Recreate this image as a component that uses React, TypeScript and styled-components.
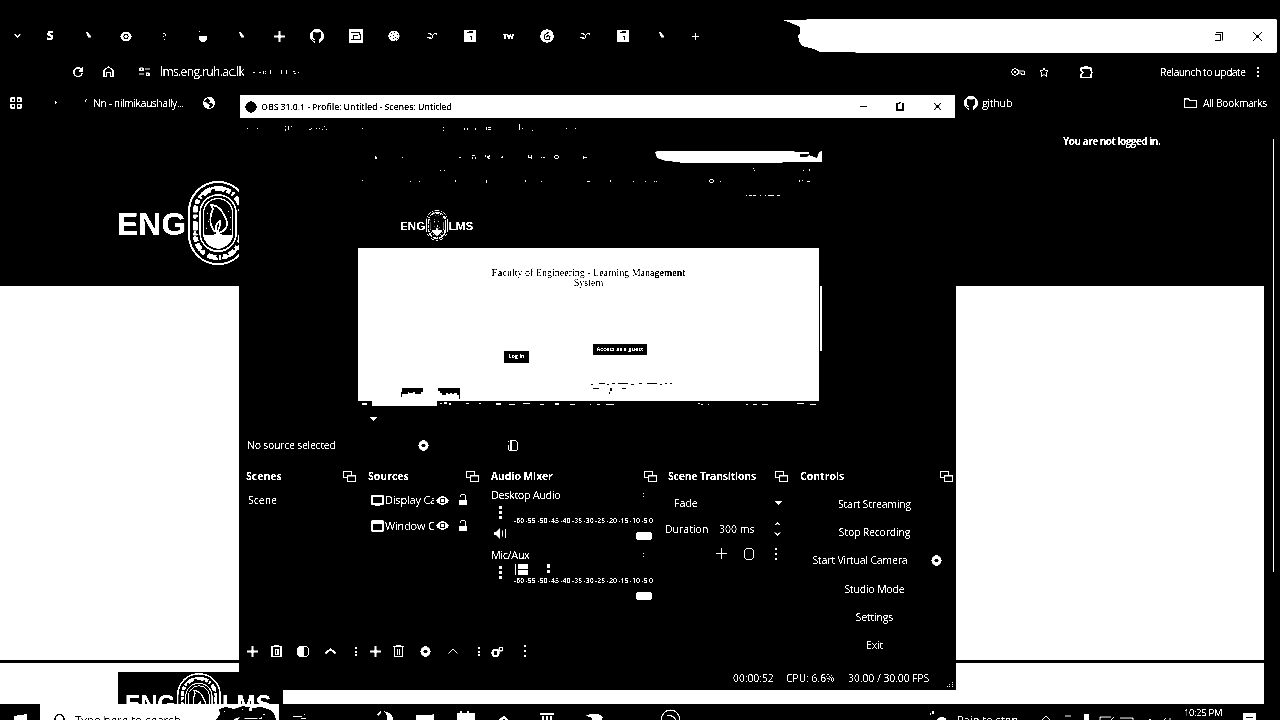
import React from 'react';
import styled, { createGlobalStyle } from 'styled-components';

const Global = createGlobalStyle`
  * { box-sizing: border-box; }
  body { margin: 0; background: #000; }
  svg { display: block; flex: none; overflow: visible; }
`;

const Desktop = styled.div`
  position: relative;
  width: 1280px;
  height: 720px;
  overflow: hidden;
  background: #000;
  color: #fff;
  font-family: 'Open Sans', 'Noto Sans', sans-serif;
  font-size: 11px;
  line-height: 1;
  filter: grayscale(1) contrast(12);
`;

/* ---------- shared parts ---------- */
const Row = styled.div<{ $h: number; $pl?: number; $pt?: number; $top?: boolean }>`
  display: flex;
  align-items: ${p => (p.$top ? 'flex-start' : 'center')};
  flex: none;
  height: ${p => p.$h}px;
  padding-top: ${p => p.$pt ?? 0}px;
  padding-left: ${p => p.$pl ?? 0}px;
`;
const Slot = styled.div<{ $w: number; $ml?: number; $pt?: number; $pb?: number; $start?: boolean }>`
  display: flex;
  flex: none;
  align-items: center;
  justify-content: ${p => (p.$start ? 'flex-start' : 'center')};
  width: ${p => p.$w}px;
  margin-left: ${p => p.$ml ?? 0}px;
  padding-top: ${p => p.$pt ?? 0}px;
  padding-bottom: ${p => p.$pb ?? 0}px;
`;
const Label = styled.span<{ $ml?: number; $mt?: number; $size?: number; $ls?: number; $weight?: number; $w?: number; $clip?: boolean }>`
  flex: none;
  white-space: nowrap;
  overflow: ${p => (p.$clip ? 'hidden' : 'visible')};
  width: ${p => (p.$w ? p.$w + 'px' : 'auto')};
  line-height: 16px;
  margin-left: ${p => p.$ml ?? 0}px;
  margin-top: ${p => p.$mt ?? 0}px;
  font-size: ${p => p.$size ?? 10.5}px;
  letter-spacing: ${p => p.$ls ?? 0}px;
  font-weight: ${p => p.$weight ?? 500};
`;

type Box = [number, number, number, number];
const Specks = ({ w, h, boxes, color = '#fff' }: { w: number; h: number; boxes: Box[]; color?: string }) => (
  <svg width={w} height={h} shapeRendering="crispEdges">
    {boxes.map((b, i) => <rect key={i} x={b[0]} y={b[1]} width={b[2]} height={b[3]} fill={color} />)}
  </svg>
);

/* ---------- icons ---------- */
const Line = ({ w, h, d, sw = 1, color = '#fff', fill = 'none' }: { w: number; h: number; d: string; sw?: number; color?: string; fill?: string }) => (
  <svg width={w} height={h} viewBox={`0 0 ${w} ${h}`} fill={fill} stroke={color} strokeWidth={sw}><path d={d} /></svg>
);
const Plus = ({ s = 11, sw = 1.5 }: { s?: number; sw?: number }) => <Line w={s} h={s} sw={sw} d={`M${s / 2} 0V${s}M0 ${s / 2}H${s}`} />;
const Dots = ({ s = 2, gap = 2.5 }: { s?: number; gap?: number }) => (
  <Specks w={s} h={s * 3 + gap * 2} boxes={[[0, 0, s, s], [0, s + gap, s, s], [0, 2 * (s + gap), s, s]]} />
);
const Gear = ({ s = 11 }: { s?: number }) => (
  <svg width={s} height={s} viewBox="0 0 11 11">
    <path fill="#fff" fillRule="evenodd" d="M4.500 0h2l.7 1.600h2L9.800 3.500 11 5.500 9.800 7.500 9.200 9.400h-2L6.500 11h-2L3.800 9.400h-2L1.200 7.500 0 5.500 1.200 3.500 1.800 1.600h2zM5.500 3.400a2.100 2.100 0 1 0 0 4.200 2.100 2.100 0 1 0 0-4.200z" />
  </svg>
);
const Popout = () => <Line w={13} h={11} d="M4.500 6.500H.5V.5H8.500V4M4.500 4.500H12.500V10.500H4.500zM4 5H13" />;
const Caret = () => <svg width={7} height={4}><path d="M0 0H7L3.500 4z" fill="#fff" /></svg>;
const Chevron = ({ down, w = 11, h = 6, sw = 1.7 }: { down?: boolean; w?: number; h?: number; sw?: number }) => (
  <Line w={w} h={h} sw={sw} d={down ? `M.5 .5L${w / 2} ${h - 1}L${w - 0.5} .5` : `M.5 ${h - 0.5}L${w / 2} 1L${w - 0.5} ${h - 0.5}`} />
);
const Trash = ({ bold }: { bold?: boolean }) => (
  <Specks w={11} h={12} boxes={[
    [0, 1, 11, 1], [3, 0, 5, 1], [1, 2, 1, 10], [9, 2, 1, 10], [1, 11, 9, 1], [4, 4, 1, 6], [6, 4, 1, 6],
    ...(bold ? ([[0, 2, 1, 10], [10, 2, 1, 10], [4, 4, 4, 1], [4, 9, 4, 1], [7, 4, 1, 6]] as Box[]) : []),
  ]} />
);
const Eye = () => (
  <svg width={13} height={9} viewBox="0 0 13 9">
    <path d="M0 4.500C3-1.300 10-1.300 13 4.500 10 10.300 3 10.300 0 4.500z" fill="#fff" />
    <circle cx="6.500" cy="4.500" r="2.300" fill="none" stroke="#000" strokeWidth="1.300" />
  </svg>
);
const Lock = () => (
  <Specks w={8} h={12} boxes={[[2, 0, 4, 1], [1, 1, 1, 2], [6, 1, 1, 5], [0, 6, 8, 5]]} />
);
const Github = ({ s = 14 }: { s?: number }) => (
  <svg width={s} height={s} viewBox="0 0 16 16"><path fill="#fff" d="M8 0C3.580 0 0 3.580 0 8c0 3.540 2.290 6.530 5.470 7.590.4.070.55-.17.55-.38 0-.19-.01-.82-.01-1.490-2.010.37-2.530-.49-2.690-.94-.09-.23-.48-.94-.82-1.130-.28-.15-.68-.52-.01-.53.63-.01 1.080.58 1.230.82.72 1.210 1.870.87 2.330.66.070-.52.28-.87.51-1.070-1.780-.2-3.640-.89-3.640-3.950 0-.87.31-1.590.82-2.150-.08-.2-.36-1.020.08-2.120 0 0 .67-.21 2.200.82.64-.18 1.320-.27 2-.27s1.360.09 2 .27c1.530-1.040 2.200-.82 2.200-.82.44 1.100.16 1.920.08 2.120.51.56.82 1.270.82 2.150 0 3.070-1.870 3.750-3.650 3.950.29.25.54.73.54 1.480 0 1.070-.01 1.930-.01 2.200 0 .21.15.46.55.38A8.010 8.010 0 0 0 16 8c0-4.420-3.580-8-8-8z" /></svg>
);
const Leaf = () => <svg width={5} height={9}><path d="M0 0H2L3 2 5 4V5.500H2L1 3z" fill="#fff" /></svg>;
const Squiggle = () => <Specks w={10} h={8} boxes={[[1, 1, 3, 1], [3, 2, 2, 1], [5, 3, 1, 1], [0, 5, 4, 1], [2, 6, 3, 1], [5, 4, 1, 2], [6, 2, 1, 1], [7, 1, 3, 1], [9, 2, 1, 1]]} />;
const SquareT = () => (
  <svg width={12} height={12} shapeRendering="crispEdges"><rect width="12" height="12" fill="#fff" /><path d="M3 2H9V3H3zM5 1H9V2H5zM7 6H8V10H7zM6 6H8V7H6z" fill="#000" /></svg>
);
const Swirl = () => (
  <svg width={14} height={14}><circle cx="7" cy="7" r="6.800" fill="#fff" /><path d="M9 3L5 5.500 4 9 6 11 9.500 10 10 7.500 7.500 6.500 6.500 8.500" stroke="#000" fill="none" strokeWidth="1.100" /></svg>
);
const Globe = () => (
  <svg width={12} height={12}><circle cx="6" cy="6" r="5.400" fill="#000" stroke="#fff" strokeWidth="1.100" /><path d="M0 5L3 5 5 7 7 8 5.500 11 3 11 1 9zM5 1L8 0 11 3 12 7 10 8 8.500 6 6 6 7 4z" fill="#fff" /></svg>
);
const Knot = () => (
  <svg width={12} height={12}><circle cx="6" cy="6" r="5.600" fill="#fff" /><path d="M3 2.500h1v1h-1zM6 2h1v1h-1zM8.500 4h1v1h-1zM5 4.500h1v1h-1zM2 6h1v1h-1zM7 6.500h1v1h-1zM4.500 8h1v1h-1zM9 8h1v1h-1zM6.500 10h1v1h-1z" fill="#000" shapeRendering="crispEdges" /></svg>
);

const Wordmark = styled.div<{ $size: number }>`
  display: flex;
  align-items: center;
  flex: none;
  font-family: 'Liberation Sans', Arial, sans-serif;
  font-weight: 700;
  font-size: ${p => p.$size}px;
  gap: 0.06em;
  span { padding-top: 0.05em; }
`;
const Logo = ({ size }: { size: number }) => (
  <Wordmark $size={size}>
    <span>ENG</span>
    <svg width={size * 1.88} height={size * 2.63} viewBox="0 0 60 84" fill="none" stroke="#fff">
      <rect x="1" y="1" width="58" height="82" rx="29" strokeWidth="2" />
      <rect x="7.500" y="7.500" width="45" height="69" rx="22.500" strokeWidth="5" strokeDasharray="7 2 4 2 2 3 9 4 3 2" />
      <rect x="6.500" y="6.500" width="47" height="71" rx="23.500" strokeWidth="2" strokeDasharray="3 4 6 2" />
      <rect x="11.500" y="13.500" width="37" height="57" rx="18.500" stroke="#000" strokeWidth="4" />
      <rect x="12" y="14" width="36" height="56" rx="18" strokeWidth="1.500" />
      <rect x="15.500" y="17.500" width="29" height="49" rx="14.500" strokeWidth="1.300" />
      <path d="M27 51C20 43 22 33 25 28L23 24C31 24 34 30 38 38C41 45 37 50 30 52C25 47 29 41 32 40C33 45 30 48 29 52" strokeWidth="1.700" />
      <path d="M17 54L25 55 29 52 36 55 43 54C43 62 36 67 30 67S18 63 17 54z" fill="#fff" />
      <path d="M19 32h1M20 40h1M40 30h1M42 36h1M18 47h1M42 48h1" strokeWidth="1.300" />
    </svg>
    <span>LMS</span>
  </Wordmark>
);

/* ---------- browser ---------- */
const Browser = styled.div`
  display: flex;
  flex-direction: column;
  width: 1280px;
  height: 704px;
  padding-top: 19px;
`;
const TabStrip = styled.div`
  display: flex;
  height: 34px;
  flex: none;
  align-items: center;
`;
const CaptionBar = styled.div`
  display: flex;
  align-items: center;
  width: 495px;
  height: 34px;
  margin-left: auto;
  margin-right: 3px;
  background: #fff;
  clip-path: polygon(0 1px, 24px 1px, 25px 0, 494px 0, 495px 1px, 495px 33px, 494px 34px, 74px 34px, 73px 33px, 38px 33px, 32px 30px, 20px 27px, 17px 22px, 16px 16px, 18px 15px, 18px 8px, 7px 3px);
`;
const SiteHeader = styled.div`
  display: flex;
  height: 171px;
  flex: none;
`;
const SiteBrand = styled.div`
  padding: 66px 0 0 117px;
  width: 1063px;
  flex: none;
  display: flex;
  align-items: flex-start;
`;
const PageBody = styled.div`
  display: flex;
  height: 418px;
  flex: none;
`;
const PageColumn = styled.div`
  width: 1264px;
  display: flex;
  flex-direction: column;
  gap: 3px;
`;
const WhiteArea = styled.div<{ $h: number }>`
  height: ${p => p.$h}px;
  flex: none;
  background: #fff;
`;
const FooterBrand = styled.div`
  width: 165px;
  height: 32px;
  margin: 9px 0 0 118px;
  padding: 1px 0 0 7px;
  background: #000;
  overflow: hidden;
`;
const ScrollThumb = styled.div`
  position: absolute;
  left: 1273px;
  top: 139px;
  width: 1px;
  height: 433px;
  background: #fff;
`;
const Badge = styled.span<{ $size: number }>`
  font-size: ${p => p.$size}px;
  font-weight: 800;
`;

/* ---------- recorder window ---------- */
const Recorder = styled.div`
  position: absolute;
  left: 239px;
  top: 94px;
  width: 717px;
  height: 596px;
  background: #000;
  padding: 1px 1px 0;
  display: flex;
  flex-direction: column;
`;
const TitleBar = styled.div`
  height: 23px;
  flex: none;
  display: flex;
  align-items: center;
  background: #fff;
  color: #000;
`;
const Capture = styled.div`
  width: 465px;
  height: 260px;
  margin-left: 118px;
  flex: none;
  display: flex;
  flex-direction: column;
`;
const CaptureCaption = styled.div`
  width: 167px;
  height: 12px;
  margin: 1px 0 0 297px;
  background: #fff;
  clip-path: polygon(0 1px, 3px 0, 139px 0, 140px 1px, 154px 1px, 154px 3px, 145px 3px, 145px 6px, 152px 6px, 154px 4px, 159px 6px, 162px 7px, 164px 1px, 167px 0, 167px 11px, 128px 11px, 127px 12px, 26px 12px, 24px 11px, 11px 10px, 2px 7px);
`;
const CapturePage = styled.div`
  width: 461px;
  height: 153px;
  background: #fff;
  color: #000;
  padding-top: 20px;
  display: flex;
  flex-direction: column;
`;
const Heading = styled.div`
  font: 400 10px/10px 'Liberation Serif', serif;
  text-align: center;
  b { font-weight: 700; }
`;
const Forms = styled.div`
  display: flex;
  align-items: flex-start;
  height: 78px;
  padding: 25px 0 0 145px;
`;
const SmallButton = styled.div<{ $w: number; $h: number; $mt: number; $ml: number }>`
  width: ${p => p.$w}px;
  height: ${p => p.$h}px;
  margin: ${p => p.$mt}px 0 0 ${p => p.$ml}px;
  background: #000;
  color: #fff;
  font-size: 5.5px;
  font-weight: 700;
  line-height: ${p => p.$h - 1}px;
  text-align: center;
  white-space: nowrap;
`;
const Docks = styled.div`
  display: flex;
  height: 198px;
  flex: none;
`;
const Dock = styled.div<{ $w: number; $pl: number }>`
  width: ${p => p.$w}px;
  padding-left: ${p => p.$pl}px;
  flex: none;
  display: flex;
  flex-direction: column;
`;
const DockTitle = styled.div<{ $end: number }>`
  display: flex;
  align-items: center;
  justify-content: space-between;
  height: 20px;
  flex: none;
  padding-right: ${p => p.$end}px;
`;
const DockTools = styled.div`
  display: flex;
  align-items: center;
  height: 28px;
  flex: none;
  margin-top: -27px;
`;
const MixerColumn = styled.div`
  width: 161px;
`;
const Scale = styled.div`
  display: flex;
  justify-content: space-between;
  width: 139px;
  margin: 2px 0 0 23px;
  font-size: 7px;
  font-weight: 600;
  line-height: 8px;
`;
const Knob = styled.div`
  width: 16px;
  height: 8px;
  border-radius: 3px;
  background: #fff;
  margin-left: auto;
`;
const ControlRow = styled.div`
  height: 28.2px;
  flex: none;
  display: flex;
  align-items: center;
  justify-content: center;
  width: 149px;
`;

/* ---------- taskbar ---------- */
const Taskbar = styled.div`
  height: 40px;
  width: 1280px;
  display: flex;
  align-items: flex-start;
`;
const SearchBox = styled.div`
  width: 239px;
  height: 40px;
  flex: none;
  background: #fff;
  color: #000;
  display: flex;
  align-items: flex-start;
`;

const tabs: React.ReactNode[] = [
  <Badge $size={12}>S</Badge>, <Leaf />,
  <svg width={12} height={9}><path d="M0 4.500L3 0H9L12 4.500 9 9H3z" fill="#fff" /><circle cx="6" cy="4.500" r="2.300" fill="none" stroke="#000" /></svg>,
  <Specks w={4} h={8} boxes={[[0, 1, 2, 1], [2, 2, 1, 2], [0, 4, 1, 1], [1, 7, 1, 1]]} />,
  <svg width={8} height={11}><path d="M0 5H8V8Q7 11 4 11T0 8zM0 0h1v1h-1z" fill="#fff" /></svg>,
  <Leaf />, <Plus s={11} sw={2} />, <Github />,
  <svg width={14} height={14} shapeRendering="crispEdges"><rect width="14" height="14" fill="#fff" /><path d="M2 3.500H10.500V5M2 10.500H11.500V5.500H10M4.500 10V6.500H9" stroke="#000" fill="none" /></svg>,
  <Knot />,
  <Squiggle />, <SquareT />, <Badge $size={7}>TW</Badge>, <Swirl />, <Squiggle />, <SquareT />, <Leaf />,
];

const menuSpecks: Box[] = [[7, 10, 1, 1], [17, 10, 1, 1], [45, 8, 1, 1], [45, 11, 1, 2], [48, 8, 1, 4], [51, 8, 1, 1], [69, 11, 2, 1], [71, 10, 1, 1], [76, 10, 1, 1], [79, 10, 1, 1], [82, 11, 1, 1], [84, 8, 1, 1], [86, 11, 1, 1], [122, 10, 1, 1], [203, 9, 1, 1], [203, 12, 1, 1], [224, 10, 1, 2], [227, 10, 1, 2], [235, 10, 1, 2], [246, 9, 1, 3], [248, 9, 3, 1], [248, 11, 3, 1], [279, 6, 1, 6], [282, 10, 1, 1], [292, 12, 1, 1], [326, 10, 1, 1], [335, 10, 1, 1]];
const capTabs: Box[] = [[17, 6, 1, 1], [17, 7, 2, 2], [44, 7, 1, 1], [101, 7, 2, 1], [114, 5, 3, 1], [114, 7, 1, 2], [117, 7, 1, 2], [127, 5, 1, 2], [129, 6, 2, 2], [131, 5, 1, 2], [130, 8, 2, 1], [143, 7, 2, 1], [144, 6, 1, 1], [170, 5, 1, 3], [171, 7, 3, 1], [173, 5, 1, 4], [183, 7, 1, 1], [185, 7, 2, 1], [197, 5, 3, 1], [196, 6, 1, 2], [200, 6, 1, 2], [197, 8, 3, 1], [225, 6, 1, 3], [226, 7, 3, 1]];
const capBar: Box[] = [[82, 3, 1, 1], [86, 3, 1, 1], [395, 1, 1, 1], [396, 3, 1, 1], [445, 3, 1, 1], [451, 2, 1, 2], [4, 13, 1, 1], [52, 14, 1, 1], [61, 14, 1, 1], [97, 13, 1, 2], [128, 13, 1, 3], [167, 13, 1, 2], [183, 14, 1, 1], [229, 14, 3, 1], [252, 13, 1, 2], [275, 14, 1, 1], [287, 14, 1, 1], [296, 14, 1, 1], [298, 14, 1, 1], [352, 12, 3, 1], [351, 13, 1, 2], [355, 13, 1, 2], [352, 15, 3, 1], [362, 14, 1, 1], [441, 13, 1, 2], [444, 13, 1, 1], [449, 14, 3, 1], [388, 28, 1, 1], [391, 28, 3, 1], [395, 28, 3, 1], [402, 28, 1, 1], [407, 28, 1, 1], [410, 28, 6, 1], [419, 28, 3, 1]];
const capFoot: Box[] = [[4, 2, 5, 2], [14, 0, 65, 5], [82, 2, 2, 1], [86, 1, 3, 2], [91, 2, 2, 2], [108, 2, 3, 1], [121, 2, 2, 1], [138, 2, 5, 2], [151, 3, 6, 1], [165, 2, 7, 1], [182, 3, 4, 1], [197, 2, 4, 2], [212, 3, 5, 1], [232, 3, 1, 1], [239, 3, 3, 1], [248, 3, 8, 1], [340, 2, 2, 1], [343, 3, 2, 1], [350, 3, 1, 1], [388, 3, 2, 1], [395, 3, 4, 1], [404, 3, 6, 1], [439, 2, 7, 1], [452, 3, 6, 1]];
const pageInk: Box[] = [[44, 22, 21, 4], [43, 26, 7, 2], [51, 26, 4, 1], [57, 26, 6, 2], [43, 28, 1, 3], [80, 22, 22, 3], [82, 25, 20, 2], [84, 27, 4, 2], [90, 27, 2, 1], [94, 27, 2, 1], [99, 27, 3, 2], [101, 29, 1, 4], [233, 18, 2, 1], [241, 17, 6, 1], [249, 18, 2, 1], [254, 17, 3, 1], [260, 17, 10, 1], [273, 18, 3, 1], [281, 17, 3, 1], [289, 17, 10, 1], [302, 18, 2, 1], [307, 17, 2, 1], [312, 17, 2, 1], [235, 22, 6, 1], [252, 22, 2, 3], [251, 26, 1, 2], [264, 22, 4, 1]];

const Mixer = ({ name, active }: { name: string; active?: boolean }) => (
  <>
    <Row $h={18}><Label $w={152} $size={11} $ls={-0.45}>{name}</Label><Specks w={1} h={4} boxes={[[0, 0, 1, 1], [0, 3, 1, 1]]} /></Row>
    <Row $h={11} $pl={7}>
      <Slot $w={4} $pt={6}><Dots s={3} gap={2} /></Slot>
      {active && <Slot $w={36} $ml={13}><Specks w={36} h={11} boxes={[[0, 0, 1, 11], [3, 0, 10, 5], [3, 6, 10, 5], [32, 0, 3, 4], [32, 6, 3, 3]]} /></Slot>}
    </Row>
    <Scale>{['-60', '-55', '-50', '-45', '-40', '-35', '-30', '-25', '-20', '-15', '-10', '-5', '0'].map(t => <span key={t}>{t}</span>)}</Scale>
    <Row $h={21} $pl={3}>
      {!active && <Slot $w={13} $pb={5}><svg width={13} height={11}><path d="M0 4H2L6 0V11L2 7H0z" fill="#fff" /><path d="M8.500 2.500V8.500M11.500 1V10" stroke="#fff" strokeWidth="1.500" /></svg></Slot>}
      <Knob />
    </Row>
  </>
);

export default function App() {
  return (
    <Desktop>
      <Global />
      <Browser>
        <TabStrip>
          <Slot $w={31} $ml={2}><Chevron down w={7} h={4} sw={1.500} /></Slot>
          {tabs.map((t, i) => <Slot key={i} $w={38.200} $ml={i ? 0 : -2}>{t}</Slot>)}
          <Slot $w={31}><Plus s={7} sw={1} /></Slot>
          <CaptionBar>
            <Slot $w={10} $ml={432}><Line w={8} h={9} color="#000" d="M1 .5H7.500V8.500M0 2.500H5.500V8.500H0" /></Slot>
            <Slot $w={10} $ml={28}><Line w={9} h={9} color="#000" d="M0 0L9 9M9 0L0 9" sw={1.300} /></Slot>
          </CaptionBar>
        </TabStrip>
        <Row $h={37}>
          <Slot $w={12} $ml={72}><Line w={10} h={10} sw={1.400} d="M9 3.500A4.300 4.300 0 1 0 9.300 6M9.500 0V4H5.500" /></Slot>
          <Slot $w={12} $ml={18}><Line w={11} h={11} sw={1.400} d="M1 10.500V4L5.500 1 10 4V10.500H7.500V6.500H3.500V10.500z" /></Slot>
          <Slot $w={12} $ml={24}><Line w={11} h={9} sw={1.100} d="M1 1H4V3.500H1zM6 2H11M0 7H5M7.500 6H10V8.500H7.500z" /></Slot>
          <Label $ml={10} $size={12} $ls={-0.600} $w={86}>lms.eng.ruh.ac.lk</Label>
          <Slot $w={50} $ml={5}><Specks w={50} h={8} boxes={[[2, 4, 2, 1], [8, 4, 2, 1], [12, 3, 1, 3], [14, 3, 1, 1], [14, 5, 1, 1], [19, 2, 1, 4], [30, 2, 1, 4], [35, 2, 1, 4], [42, 3, 2, 1], [43, 5, 2, 1], [47, 4, 1, 1]]} /></Slot>
          <Slot $w={16} $ml={709}><svg width={14} height={8} fill="none" stroke="#fff"><circle cx="4" cy="4" r="3.300" /><circle cx="4" cy="4" r="1" fill="#fff" /><path d="M7 3H13.500V6.500H10.500V5H7" /></svg></Slot>
          <Slot $w={12} $ml={12}><Line w={10} h={10} sw={1} d="M5 .5L6.300 3.700 9.500 4 7 6.300 8 9.500 5 7.700 2 9.500 3 6.300 .5 4 3.700 3.700z" /></Slot>
          <Slot $w={14} $ml={29}><Line w={13} h={12} sw={1.300} d="M1 2H11V5L12.500 6.500 11 8V11.500H1V8.500L3 6.500 1 5zM4 1H8" /></Slot>
          <Label $ml={67} $ls={-0.550} $w={86}>Relaunch to update</Label>
          <Slot $w={4} $ml={10}><Dots gap={2} /></Slot>
        </Row>
        <Row $h={25}>
          <Slot $w={12} $ml={10}><Line w={12} h={12} sw={1.300} d="M1 1H4.500V4.500H1zM7.500 1H11V4.500H7.500zM1 7.500H4.500V11H1zM7.500 7.500H11V11H7.500z" /></Slot>
          <Slot $w={3} $ml={32}><Specks w={2} h={3} boxes={[[0, 0, 1, 3], [1, 1, 1, 1]]} /></Slot>
          <Slot $w={3} $ml={28}><Specks w={3} h={8} boxes={[[1, 0, 1, 1], [0, 1, 1, 2]]} /></Slot>
          <Label $ml={5} $ls={-0.480} $w={98}>Nn - nilmikaushally...</Label>
          <Slot $w={14} $ml={11}><Globe /></Slot>
          <Slot $w={14} $ml={748}><Github /></Slot>
          <Label $ml={4} $size={11} $ls={-0.450} $w={31}>github</Label>
          <Slot $w={14} $ml={170}><Line w={13} h={10} sw={1.200} d="M.5 .8H4.500L6 2.500H12.500V9.500H.5z" /></Slot>
          <Label $ml={6} $ls={-0.480}>All Bookmarks</Label>
        </Row>
        <SiteHeader>
          <SiteBrand><Logo size={32} /></SiteBrand>
          <Label $mt={18} $size={10} $ls={-0.500} $weight={700}>You are not logged in.</Label>
        </SiteHeader>
        <PageBody>
          <PageColumn>
            <WhiteArea $h={374} />
            <WhiteArea $h={41}><Row $h={41}><FooterBrand><Logo size={23.300} /></FooterBrand></Row></WhiteArea>
          </PageColumn>
        </PageBody>
      </Browser>
      <ScrollThumb />

      <Taskbar>
        <Slot $w={40} $pt={10}><svg width={13} height={14}><path d="M0 2L13 0V14H0z" fill="#fff" /></svg></Slot>
        <SearchBox>
          <Slot $w={12} $ml={13} $pt={10}><Line w={11} h={12} color="#000" sw={1.300} d="M10 5A4.500 4.500 0 1 0 1 5A4.500 4.500 0 1 0 10 5" /></Slot>
          <Label $ml={10} $mt={8} $size={11.500} $w={109}>Type here to search</Label>
          <Slot $w={63} $ml={31} $pt={2}>
            <svg width={61} height={20}><path d="M0 14L4 8 3 3 10 1 18 3 27 0 36 2 46 1 54 4 58 7 60 14V20H0z" fill="#000" /><path d="M33 2h3v3h-3zM8 5h1v1H8zM26 3h1v1h-1zM18 13L24 11 22 14H18zM29 12h12l1 1 4-2v2H28zM47 8h2v1h-2z" fill="#fff" /></svg>
          </Slot>
        </SearchBox>
        <Slot $w={622} $start>
          <svg width={620} height={18} fill="#fff">
            <path d="M14 12h9v1h-9zM22 14h5v1h-5zM25 10h1v1h-1z" />
            <path d="M104 7C112 8 116 14 113 18H107Q110 11 104 7zM98 10l4-3v2l-3 3zM137 11H152L155 10V18H137zM178 9H181V7H183V9H188V7H190V9H196V18H178zM261 9H275V11H261zM263 12h2v6h-2zM267 12h2v6h-2zM271 12h2v6h-2zM306 12Q318 7 324 13L322 18H314L312 13zM220 15L225 12 230 16 228 18 225 14 222 18z" />
            <path d="M383 18A9 9 0 1 1 400 18M388 12Q394 10 398 18" fill="none" stroke="#fff" strokeWidth="1.200" />
          </svg>
        </Slot>
        <Slot $w={16} $ml={29} $pt={7}><svg width={16} height={14} fill="#fff"><path d="M2 0h2v3H2zM0 2h1v2H0zM5 14Q6 6 12 6T16 14z" /></svg></Slot>
        <Label $ml={11} $mt={8} $size={11} $w={68}>Rain to stop</Label>
        <Slot $w={136} $ml={14} $pt={8}>
          <svg width={136} height={16} fill="none" stroke="#fff"><path d="M3 8L7 4 11 8M24 16A5 5 0 1 1 33 12M26 4h6M61 16V5H72M75 5L68 12V16M81 6H94V9H83V14M106 12l5-5 4 5M121 12L127 6M131 6v8" /><path d="M45 2h5v14h-5z" fill="#fff" stroke="none" /></svg>
        </Slot>
        <Label $ml={9} $mt={1} $size={9.500} $ls={-0.350} $w={41}>10:25 PM</Label>
        <Slot $w={14} $ml={17} $pt={9}><svg width={13} height={10}><path d="M0 0H13V10H0z" fill="#fff" /><path d="M3 4.500H10" stroke="#000" /></svg></Slot>
      </Taskbar>

      <Recorder>
        <TitleBar>
          <Slot $w={12} $ml={5}><svg width={12} height={12}><circle cx="6" cy="6" r="5.700" fill="#000" /></svg></Slot>
          <Label $ml={4} $size={9} $ls={-0.180} $weight={600} $w={196}>OBS 31.0.1 - Profile: Untitled - Scenes: Untitled</Label>
          <Slot $w={8} $ml={402}><Line w={7} h={1} color="#000" d="M0 .5H7" sw={1.500} /></Slot>
          <Slot $w={10} $ml={28}><Specks w={8} h={9} color="#000" boxes={[[0, 1, 2, 8], [0, 7, 8, 2], [6, 1, 2, 8], [2, 1, 2, 1], [3, 0, 2, 1]]} /></Slot>
          <Slot $w={10} $ml={27}><Line w={7} h={7} color="#000" d="M0 0L7 7M7 0L0 7" sw={1.400} /></Slot>
        </TitleBar>
        <Row $h={31}><Specks w={700} h={31} boxes={menuSpecks} /></Row>
        <Capture>
          <Row $h={14} $top $pt={1}>
            <Slot $w={0} $start><Specks w={240} h={14} boxes={capTabs} /></Slot>
            <CaptureCaption />
          </Row>
          <Row $h={42} $top $pt={4}><Specks w={465} h={36} boxes={capBar} /></Row>
          <Row $h={43} $top $pt={5} $pl={42}><Logo size={11.700} /></Row>
          <Row $h={153}>
            <CapturePage>
              <Heading><b>Fa</b>culty of Engineering - Learning Mana<b>gement</b><br />System</Heading>
              <Row $h={0}><Specks w={400} h={0} color="#000" boxes={[[165, 22, 1, 1], [150, 38, 2, 1], [154, 38, 1, 1], [156, 38, 1, 1], [243, 30, 1, 1], [265, 30, 1, 1], [253, 37, 1, 1]]} /></Row>
              <Forms>
                <SmallButton $w={25} $h={12} $mt={38} $ml={1}>Log in</SmallButton>
                <SmallButton $w={54} $h={11} $mt={31} $ml={64}>Access as a guest</SmallButton>
              </Forms>
              <Row $h={35} $top><Specks w={461} h={35} color="#000" boxes={pageInk} /></Row>
            </CapturePage>
            <Slot $w={2} $ml={1} $pb={12}><Specks w={2} h={65} boxes={[[0, 0, 2, 65]]} /></Slot>
          </Row>
          <Specks w={465} h={5} boxes={capFoot} />
        </Capture>
        <Row $h={24} $pl={130} $top $pt={8}><Caret /></Row>
        <Row $h={24} $pl={7}>
          <Label $w={92} $ls={-0.250}>No source selected</Label>
          <Slot $w={12} $ml={78}><Gear /></Slot>
          <Slot $w={12} $ml={78}><Specks w={10} h={11} boxes={[[0, 5, 1, 5], [0, 1, 1, 1], [2, 0, 2, 10], [4, 0, 4, 1], [8, 1, 1, 1], [9, 2, 1, 8], [1, 10, 8, 1]]} /></Slot>
        </Row>
        <Row $h={9} />
        <Docks>
          <Dock $w={122} $pl={6}>
            <DockTitle $end={6}><Label $weight={700}>Scenes</Label><Popout /></DockTitle>
            <Row $h={28} $pl={2}><Label>Scene</Label></Row>
          </Dock>
          <Dock $w={123} $pl={6}>
            <DockTitle $end={6}><Label $weight={700}>Sources</Label><Popout /></DockTitle>
            <Row $h={28} $pl={3}>
              <Line w={13} h={11} sw={1.400} d="M1 1H12V9H1zM4 10.500H9" /><Label $ml={1} $w={49} $size={11} $ls={-0.200} $clip>Display Capture</Label>
              <Slot $w={13} $ml={2}><Eye /></Slot><Slot $w={8} $ml={10}><Lock /></Slot>
            </Row>
            <Row $h={23} $pl={3}>
              <Line w={13} h={12} sw={1.300} d="M1 1H12V11H1zM1 2H12M1 3.300H12" /><Label $ml={1} $w={49} $size={11} $ls={-0.200} $clip>Window Capture</Label>
              <Slot $w={13} $ml={2}><Eye /></Slot><Slot $w={8} $ml={10}><Lock /></Slot>
            </Row>
          </Dock>
          <Dock $w={176} $pl={6}>
            <DockTitle $end={4}><Label $weight={700} $ls={-0.150}>Audio Mixer</Label><Popout /></DockTitle>
            <MixerColumn>
              <Mixer name="Desktop Audio" />
              <Mixer name="Mic/Aux" active />
            </MixerColumn>
          </Dock>
          <Dock $w={132} $pl={4}>
            <DockTitle $end={5}><Label $weight={700} $ls={-0.250} $ml={3}>Scene Transitions</Label><Popout /></DockTitle>
            <Row $h={34} $pl={9}><Label $w={101}>Fade</Label><Caret /></Row>
            <Row $h={18}>
              <Label $w={54}>Duration</Label><Label $w={55}>300 ms</Label>
              <Line w={7} h={14} sw={1.200} d="M1 3L3.500 .8 6 3M.5 10.500L3.500 13 6.500 10.500" />
            </Row>
            <Row $h={31} $pl={51}><Plus s={11} sw={1.300} /><Slot $w={12} $ml={16}><Line w={10} h={12} d="M2.500 .5H7.500L9.500 2.500V9.500L7.500 11.500H2.500L.5 9.500V2.500z" /></Slot><Slot $w={4} $ml={19}><Dots gap={3} /></Slot></Row>
          </Dock>
          <Dock $w={160} $pl={7}>
            <DockTitle $end={0}><Label $weight={700}>Controls</Label><Popout /></DockTitle>
            <Row $h={4} />
            {['Start Streaming', 'Stop Recording', '', 'Studio Mode', 'Settings', 'Exit'].map((t, i) => (
              <ControlRow key={i}>
                {t ? <Label $ls={-0.200}>{t}</Label> : <><Label $ml={6} $ls={-0.200} $w={96}>Start Virtual Camera</Label><Slot $w={12} $ml={22}><Gear /></Slot></>}
              </ControlRow>
            ))}
          </Dock>
        </Docks>
        <DockTools>
          <Slot $w={12} $ml={6}><Plus s={11} sw={2} /></Slot>
          <Slot $w={12} $ml={12}><Trash bold /></Slot>
          <Slot $w={12} $ml={15}><svg width={12} height={11}><rect x=".5" y=".5" width="11" height="10" rx="3" fill="none" stroke="#fff" /><path d="M3 0H7V11H3Q0 10 0 5.500T3 0z" fill="#fff" /></svg></Slot>
          <Slot $w={12} $ml={15}><Chevron /></Slot>
          <Slot $w={4} $ml={18}><Dots gap={1.500} /></Slot>
          <Slot $w={12} $ml={11}><Plus s={11} sw={2} /></Slot>
          <Slot $w={12} $ml={11}><Trash /></Slot>
          <Slot $w={12} $ml={15}><Gear /></Slot>
          <Slot $w={12} $ml={16}><Chevron sw={1.200} w={10} /></Slot>
          <Slot $w={4} $ml={18}><Dots gap={1.500} /></Slot>
          <Slot $w={14} $ml={9}><svg width={13} height={11} fill="none" stroke="#fff"><circle cx="4.500" cy="7" r="3" strokeWidth="2.200" /><circle cx="10" cy="3" r="1.800" strokeWidth="1.500" /></svg></Slot>
          <Slot $w={4} $ml={19}><Dots s={2} gap={3} /></Slot>
        </DockTools>
        <Row $h={26} $pl={493}>
          <Label $w={53} $size={10.300}>00:00:52</Label><Label $w={62} $size={10.300}>CPU: 6.6%</Label><Label $w={99} $size={10.300}>30.00 / 30.00 FPS</Label>
          <Slot $w={7} $pt={13}><Specks w={7} h={6} boxes={[[5, 0, 1, 1], [2, 2, 1, 1], [5, 2, 1, 1], [0, 4, 1, 1], [2, 4, 1, 1], [5, 4, 1, 1]]} /></Slot>
        </Row>
      </Recorder>
    </Desktop>
  );
}
